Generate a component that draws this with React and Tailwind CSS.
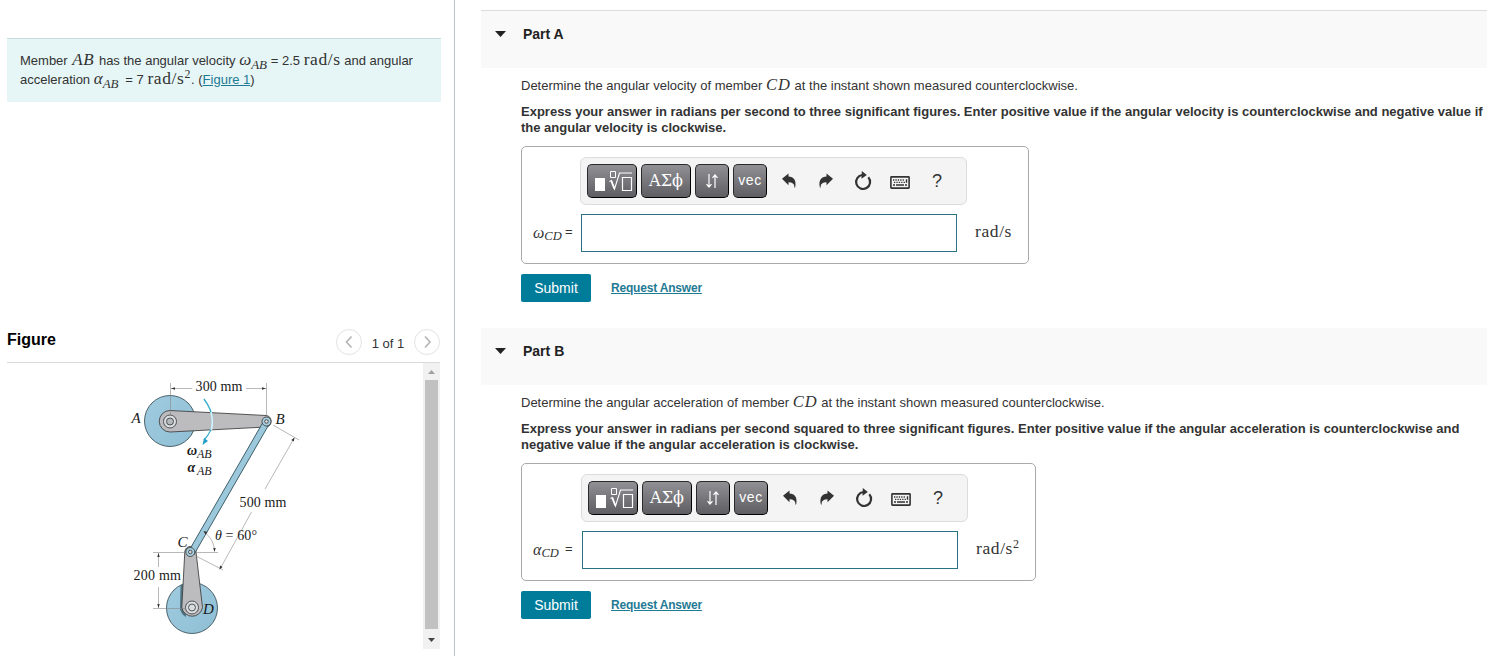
import { useState } from "react";

const parts = [
    {
        id: "A",
        quantity: "velocity",
        lines: [
            "Express your answer in radians per second to three significant figures. Enter positive value if the angular velocity is counterclockwise and negative value if",
            "the angular velocity is clockwise.",
        ],
        symbol: "ω",
        power: "",
        header: "border-t border-[#dcdcdc] h-[58px]",
        box: "w-[508px]",
        label: "w-[59px]",
    },
    {
        id: "B",
        quantity: "acceleration",
        lines: [
            "Express your answer in radians per second squared to three significant figures. Enter positive value if the angular acceleration is counterclockwise and",
            "negative value if the angular acceleration is clockwise.",
        ],
        symbol: "α",
        power: "2",
        header: "h-[57px]",
        box: "w-[515px]",
        label: "w-[60px]",
    },
];

const serif = "font-['Liberation_Serif',serif]";

function Unit({ power }) {
    return (
        <span className={`${serif} text-[17.5px] leading-none tracking-[0.6px]`}>
            rad/s{power && <span className="relative -top-[6px] text-[12px]">{power}</span>}
        </span>
    );
}

function Sym({ name, sub, width }) {
    return (
        <span className={`${serif} ${width} inline-block whitespace-nowrap italic text-[17px] leading-none`}>
            {name}
            <span className="relative top-[4px] text-[13px]">{sub}</span>
        </span>
    );
}

function ToolButton({ wide, children }) {
    return (
        <button
            className={`${wide ? "w-[50px]" : "w-[34px]"} h-[34px] shrink-0 flex items-center justify-center rounded-[5px] border border-[#2a2a2d] border-b-black border-r-black bg-gradient-to-b from-[#909095] to-[#5f5f63] text-white`}
        >
            {children}
        </button>
    );
}

function Toolbar() {
    return (
        <div className="flex w-[387px] h-[48px] items-center gap-1 rounded-[6px] border border-[#dcdcdc] bg-[#f4f4f4] pl-[6px] text-[#333]">
            <ToolButton wide>
                <svg width="48" height="32" viewBox="0 0 48 32" fill="none" stroke="#fff">
                    <rect x="7" y="13" width="10" height="13" fill="#fff" stroke="none" />
                    <path d="M22.5 6.500h5v6h-5z" strokeWidth="1" />
                    <path d="M21.500 16.500l2-1 3 8.500 5-16h12.500" strokeWidth="1.100" />
                    <path d="M23.300 16l3 7.500" strokeWidth="1.800" />
                    <path d="M34.500 12.500h9v13h-9z" strokeWidth="1.200" />
                </svg>
            </ToolButton>
            <ToolButton wide>
                <span className="font-['DejaVu_Serif',serif] text-[16px] leading-none">ΑΣϕ</span>
            </ToolButton>
            <ToolButton>
                <svg width="14" height="16" viewBox="0 0 14 16" fill="none" stroke="#fff" strokeWidth="1.200">
                    <path d="M4 1v13M1.500 11.200L4 14l2.500-2.800" />
                    <path d="M10 15V2M7.500 4.800L10 2l2.500 2.800" />
                </svg>
            </ToolButton>
            <ToolButton>
                <span className="relative -top-px text-[14px] leading-none tracking-[0.6px]">vec</span>
            </ToolButton>
            <div className="ml-[-0.5px] flex w-[185px] items-center">
                <span className="flex w-[37px] justify-center">
                    <svg width="16" height="16" viewBox="0 0 16 16" fill="#333">
                        <path d="M1 5.800L7.500 0.500v3c5 .2 8 3.400 6.800 10.300-.3 1.300-1 1.300-.9 0 0-3-2-4.500-5.900-4.500v3z" />
                    </svg>
                </span>
                <span className="flex w-[37px] justify-center">
                    <svg width="16" height="16" viewBox="0 0 16 16" fill="#333">
                        <path d="M15 5.800L8.500 0.500v3c-5 .2-8 3.400-6.800 10.300.3 1.300 1 1.300.9 0 0-3 2-4.500 5.900-4.500v3z" />
                    </svg>
                </span>
                <span className="flex w-[37px] justify-center">
                    <svg width="20" height="20" viewBox="0 0 20 20" fill="none">
                        <path d="M9.500 4A7 7 0 1 0 15.300 6.300" stroke="#333" strokeWidth="2.200" />
                        <path d="M8.800 0l5 4-5.300 3.800z" fill="#333" />
                    </svg>
                </span>
                <span className="flex w-[37px] justify-center pt-[3px]">
                    <svg width="20" height="13" viewBox="0 0 20 13" fill="none" stroke="#333">
                        <rect x="0.900" y="0.900" width="18.200" height="11.200" rx="0.500" strokeWidth="1.600" />
                        <path d="M3 4h12M4 6.300h12" strokeWidth="1.300" strokeDasharray="1.300 1.100" />
                        <path d="M3 9h2M6 9h8M15 9h2M16.500 3.300v3.500" strokeWidth="1.400" />
                    </svg>
                </span>
                <span className="w-[37px] text-center text-[18px] leading-none">?</span>
            </div>
        </div>
    );
}

function Part({ part }) {
    const [answer, setAnswer] = useState("");

    return (
        <section className="h-[317px] first:h-[318px] text-[13px] text-[#333]">
            <div className={`${part.header} flex items-start bg-[#f9f9f9] pl-[14px]`}>
                <svg className="mt-[19px]" width="11" height="8" viewBox="0 0 11 8">
                    <path d="M0 1h11L5.500 7z" fill="#222" />
                </svg>
                <h2 className="ml-[17px] mt-[13px] text-[14px] font-bold leading-5 text-[#222]">Part {part.id}</h2>
            </div>
            <div className="pl-[40px] whitespace-nowrap">
                <p className="pt-[9px] h-[36px] leading-[18px]">
                    Determine the angular {part.quantity} of member{" "}
                    <span className={`${serif} inline-block w-[25px] text-[16.5px] italic leading-none tracking-[1px]`}>CD</span>
                    {" "}at the instant shown measured counterclockwise.
                </p>
                <p className="font-bold leading-4">
                    {part.lines[0]}
                    <br />
                    {part.lines[1]}
                </p>
                <div className={`${part.box} mt-[10px] h-[118px] rounded-[5px] border border-[#a9a9a9] pt-[10px]`}>
                    <div className="flex">
                        <div className={`${part.label} shrink-0 -mr-px`} />
                        <Toolbar />
                    </div>
                    <div className="mt-[9px] flex items-center">
                        <label className={`${part.label} shrink-0 flex items-center pl-[11px]`}>
                            <span className={`${serif} w-[28px] italic text-[16px] leading-none`}>
                                {part.symbol}
                                <span className="relative top-[2px] text-[12.5px]">CD</span>
                            </span>
                            <span className="ml-[4px] -mt-[2px]">=</span>
                        </label>
                        <input
                            className="h-[38px] w-[376px] shrink-0 border border-[#2b7284] bg-white px-2 outline-none"
                            value={answer}
                            onChange={(e) => setAnswer(e.target.value)}
                        />
                        <span className="ml-[18px]"><Unit power={part.power} /></span>
                    </div>
                </div>
                <div className="mt-[10px] flex items-center">
                    <button className="h-[28px] w-[70px] rounded-[2px] bg-[#007c9b] text-[14px] text-white">Submit</button>
                    <a href="#" className="ml-[20px] text-[12px] font-bold tracking-[-0.19px] text-[#1f7a94] underline">Request Answer</a>
                </div>
            </div>
        </section>
    );
}

// Four-bar linkage: wheel A, crank AB, link BC, crank CD on wheel D
function Linkage() {
    return (
        <svg width="416" height="287" viewBox="7 363 416 287" fontFamily="'Liberation Serif', serif" fontSize="14" fill="#1a1a1a">
            <defs>
                <linearGradient id="wheel" x1="0" y1="0" x2="1" y2="1">
                    <stop offset="0" stopColor="#a0cbdf" />
                    <stop offset="1" stopColor="#8fbfd5" />
                </linearGradient>
            </defs>
            <circle cx="170" cy="421" r="25.500" fill="url(#wheel)" stroke="#3d5560" strokeWidth="0.900" />
            <path d="M170 410.500L266 415.500a5.800 5.800 0 0 1 0 11.500L170 432a10.700 10.700 0 0 1 0-21.500z" fill="#bcbcbf" stroke="#444" strokeWidth="0.900" />
            <circle cx="192" cy="608" r="25.500" fill="url(#wheel)" stroke="#3d5560" strokeWidth="0.900" />
            <path d="M184.500 584L180.500 585 180 609q1 5 6 8z" fill="#4f7380" />
            <path d="M184.800 552a5.500 5.500 0 0 1 11.200 0L202.500 607.500a10.500 10.500 0 0 1-20.700 0z" fill="#bcbcbf" stroke="#444" strokeWidth="0.900" />
            <path d="M264 420.500L269.500 423.500 194 554.500 188.500 551.500z" fill="#9cc8db" stroke="#30505e" strokeWidth="0.900" />

            <g fill="#d8dde0" stroke="#333" strokeWidth="0.800">
                <circle cx="170" cy="421.500" r="6.500" />
                <circle cx="170" cy="421.500" r="3.500" fill="#b4b9bc" />
                <circle cx="192" cy="607.500" r="6.500" />
                <circle cx="192" cy="607.500" r="3.500" />
                <circle cx="266.500" cy="421.500" r="4.500" fill="#a7cfdf" />
                <circle cx="266.500" cy="421.500" r="1.800" />
                <circle cx="190.300" cy="552" r="4.500" fill="#a7cfdf" />
                <circle cx="190.300" cy="552" r="1.800" />
            </g>

            <g stroke="#888" strokeWidth="0.600" fill="none">
                <path d="M170.500 383v32M266.500 383v32M171 388.500h21M246 388.500h20" />
                <path d="M273 425l26 15M294 438.500L265 489M251.500 512l-31.500 57M196 556l27 14" />
                <path d="M153 552.500h32M196 552.500h22M153 608.500h33M158.500 553v14M158.500 587v21" />
                <path d="M204 532q10 7 10.500 19" />
            </g>
            <g fill="#333">
                <path d="M171 388.500l4-1.200v2.400zM266 388.500l-4-1.200v2.400z" />
                <path d="M294.500 437.500l-3.200 2.500 2.500 1.500zM219.500 569.500l.5-4 2.500 1.500z" />
                <path d="M158.500 553l-1.200 4h2.400zM158.500 608l-1.200-4h2.400zM214.500 552l-1.200-4h2.400zM203.500 531l4 1-2 2.500z" />
            </g>
            <path d="M204 399q17 23 0 41" fill="none" stroke="#35aed0" strokeWidth="1.300" />
            <path d="M211 412q2.500 9 0.300 18" fill="none" stroke="#d3f1fb" strokeWidth="1.800" />
            <path d="M202.500 445l1.500-7 4 3z" fill="#229fc7" />

            <text x="195.500" y="391" textLength="47">300 mm</text>
            <text x="239.500" y="507" textLength="47">500 mm</text>
            <text x="133.500" y="580" textLength="47.500">200 mm</text>
            <g fontStyle="italic" fontSize="15">
                <text x="131.500" y="423">A</text>
                <text x="275.500" y="424">B</text>
                <text x="177.500" y="547">C</text>
                <text x="203" y="614">D</text>
            </g>
            <g fontStyle="italic" fontSize="14">
                <text x="187" y="455" fontWeight="bold">ω</text>
                <text x="197" y="458" fontSize="12">AB</text>
                <text x="187.500" y="472" fontWeight="bold">α</text>
                <text x="197" y="475" fontSize="12">AB</text>
            </g>
            <text x="215" y="540" textLength="42"><tspan fontStyle="italic">θ</tspan> = 60°</text>
        </svg>
    );
}

function PageButton({ d }) {
    return (
        <button className="flex h-[26px] w-[26px] items-center justify-center rounded-full border border-[#e3e3e3]">
            <svg width="12" height="14" viewBox="0 0 12 14" fill="none" stroke="#b5b5b5" strokeWidth="1.700">
                <path d={d} />
            </svg>
        </button>
    );
}

export default function App() {
    return (
        <div className="flex h-[656px] w-[1510px] overflow-hidden bg-white font-['Liberation_Sans',Arial,sans-serif] text-[#333]">
            <aside className="flex w-[455px] shrink-0 flex-col border-r border-[#b9c5cb] pl-[7px] pt-[38px]">
                <div className="h-[64px] w-[434px] whitespace-nowrap border-t border-[#c5dcde] bg-[#e6f6f6] pl-[13px] pt-[12px] text-[13px] leading-[19px]">
                    <div className="h-[19px]">
                        Member <span className={`${serif} inline-block w-[24px] pl-px text-[17px] italic leading-none tracking-[0.6px]`}>AB</span> has the angular velocity{" "}
                        <Sym name="ω" sub="AB" width="w-[28px]" /> = 2.5 <Unit /> and angular
                    </div>
                    <div className="h-[19px]">
                        acceleration <Sym name="α" sub="AB" width="w-[28px]" /> = 7 <Unit power="2" />. (
                        <a href="#" className="text-[#1f7a94] underline">Figure 1</a>)
                    </div>
                </div>
                <div className="mt-[223px] flex h-[38px] w-[433px] items-start justify-between border-b border-[#dadada]">
                    <h2 className="mt-[3px] text-[16px] font-bold leading-6 text-black">Figure</h2>
                    <div className="mt-[4px] flex items-center text-[13px]">
                        <PageButton d="M8.500 1.500L3.500 7l5 5.500" />
                        <span className="w-[52px] pt-[3px] text-center">1 of 1</span>
                        <PageButton d="M4 1.500l5 5.500-5 5.500" />
                    </div>
                </div>
                <div className="flex h-[287px] w-[433px]">
                    <Linkage />
                    <div className="flex h-[286px] w-[17px] flex-col items-center justify-between bg-[#f1f1f1]">
                        <svg width="17" height="17" viewBox="0 0 17 17"><path d="M5 11h7L8.500 7z" fill="#a0a0a0" /></svg>
                        <div className="h-[249px] w-[13px] bg-[#c1c1c1]" />
                        <svg width="17" height="20" viewBox="0 0 17 20"><path d="M5 9h7l-3.500 4z" fill="#444" /></svg>
                    </div>
                </div>
            </aside>
            <main className="ml-[26px] w-[1006px] pt-[10px]">
                {parts.map((part) => (
                    <Part key={part.id} part={part} />
                ))}
            </main>
        </div>
    );
}
